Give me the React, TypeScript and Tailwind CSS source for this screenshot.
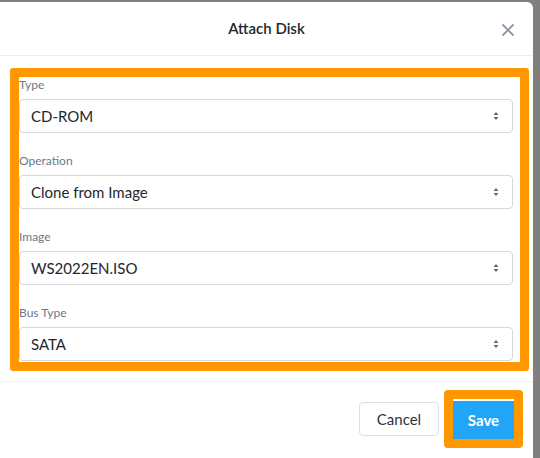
import React from "react";

const font = { fontFamily: '"Lato", "Open Sans", "Noto Sans", sans-serif' };

function Arrows() {
  return (
    <svg width="6" height="10" viewBox="0 0 6 10" className="shrink-0">
      <path d="M3 1 L5.5 4 H0.5 Z" fill="#5b6675" />
      <path d="M3 9 L5.5 6 H0.5 Z" fill="#5b6675" />
    </svg>
  );
}

function Field({ label, value }: { label: string; value: string }) {
  return (
    <div className="flex flex-col">
      <div className="h-[16px] leading-[16px] text-[12px] text-[#6a788a]">{label}</div>
      <div className="mt-[6px] h-[34px] rounded-[4px] border border-[#d3d8de] flex items-center justify-between pl-[11px] pr-[13px] text-[15px] text-[#22272e]">
        <span>{value}</span>
        <Arrows />
      </div>
    </div>
  );
}

export default function App() {
  return (
    <div className="w-[540px] h-[458px] bg-[#7f7f7f] pt-[2px] pr-[7px] overflow-hidden" style={font}>
      <div className="h-full bg-white rounded-tr-[6px] flex flex-col">
        <div className="h-[54px] border-b border-[#eceef1] flex items-center justify-center relative">
          <span className="text-[15px] font-semibold text-[#23272d]">Attach Disk</span>
          <svg
            width="12"
            height="12"
            viewBox="0 0 12 12"
            className="absolute right-[19px] top-[22px]"
          >
            <path d="M1 1 L11 11 M11 1 L1 11" stroke="#8b97a5" strokeWidth="1.8" strokeLinecap="round" />
          </svg>
        </div>
        <div className="pt-[12px] pl-[10px] pr-[4px]">
          <div className="border-[9px] border-[#ff9800] rounded-[3px] pr-[7px] pb-[1px] flex flex-col gap-[20px]">
            <Field label="Type" value="CD-ROM" />
            <Field label="Operation" value="Clone from Image" />
            <Field label="Image" value="WS2022EN.ISO" />
            <Field label="Bus Type" value="SATA" />
          </div>
        </div>
        <div className="mt-[10px] border-t border-[#eff1f3] flex justify-end items-center gap-[5px] pt-[8px] pr-[10px]">
          <button className="w-[80px] h-[34px] rounded-[4px] border border-[#dce0e5] bg-white text-[15px] text-[#30353b]">
            Cancel
          </button>
          <div className="border-[9px] border-[#ff9800] rounded-[4px]">
            <button className="w-[61px] h-[40px] bg-[#22a5f7] border-t-2 border-white text-white text-[15px] font-bold flex items-center justify-center">
              Save
            </button>
          </div>
        </div>
      </div>
    </div>
  );
}
